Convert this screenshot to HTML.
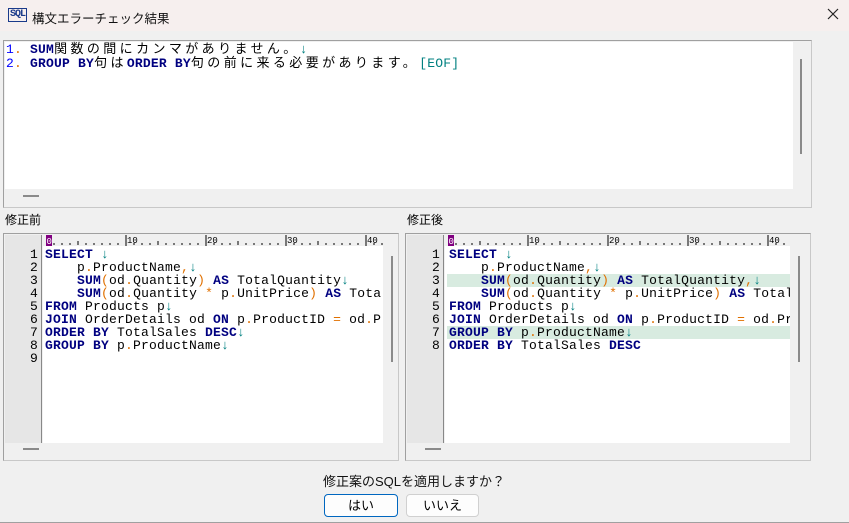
<!DOCTYPE html><html><head><meta charset="utf-8"><style>
*{margin:0;padding:0;box-sizing:border-box}
body{width:849px;height:523px;background:#f0f0f0;position:relative;overflow:hidden;font-family:"Liberation Sans","Noto Sans CJK JP",sans-serif}
.title{position:absolute;left:0;top:0;width:849px;height:31px;background:#f6efee}
.abs{position:absolute}
.mono{font-family:"Liberation Mono","Noto Sans CJK JP",monospace;font-size:13px;line-height:13px;white-space:pre;color:#000;letter-spacing:0.2px}
.j{letter-spacing:3.4px}
.k{color:#000080;font-weight:bold}
.o{color:#e07000}
.a{color:#008080}
.n{color:#0000ff}
.panel{position:absolute;border:1px solid #a0a0a0;border-right-color:#c8c8c8;border-bottom-color:#c8c8c8;background:#f0f0f0}
.thumb{position:absolute;width:2px;background:#8a8a8a}
.dash{position:absolute;width:16px;height:2px;background:#8a8a8a}
.btn{position:absolute;height:23px;border:1px solid #d0d0d0;border-radius:4px;background:#fdfdfd;font-size:13px;text-align:center;line-height:21px}
.hl{position:absolute;height:13px;background:#d8ebe0}
</style></head><body>
<div class="title"></div>
<div class="abs" style="left:8px;top:8px;font-size:10px;font-weight:bold;color:#1a3a8a;font-family:'Liberation Mono',monospace;letter-spacing:-1px;border:1px solid #1a3a8a;padding:0 1px;line-height:12px">SQL</div>
<div class="abs" style="left:32px;top:8px;font-size:12.5px;color:#111">構文エラーチェック結果</div>
<svg class="abs" style="left:827px;top:8px" width="12" height="12"><path d="M1 1L11 11M11 1L1 11" stroke="#222" stroke-width="1.2"/></svg>

<div class="panel" style="left:3px;top:40px;width:809px;height:168px">
 <div class="abs" style="left:1px;top:1px;width:788px;height:147px;background:#fff"></div>
 <div class="thumb" style="left:796px;top:18px;height:95px"></div>
 <div class="dash" style="left:19px;top:154px"></div>
</div>
<div class="abs mono" style="left:6px;top:43px;line-height:14px"><span class="n">1</span><span class="o">.</span> <span class="k">SUM</span><span class="j">関数の間にカンマがありません。</span><span class="a">↓</span>
<span class="n">2</span><span class="o">.</span> <span class="k">GROUP BY</span><span class="j">句は</span><span class="k">ORDER BY</span><span class="j">句の前に来る必要があります。</span><span class="a">[EOF]</span></div>

<div class="abs" style="left:5px;top:211px;font-size:12px">修正前</div>
<div class="abs" style="left:407px;top:211px;font-size:12px">修正後</div>

<!-- left editor -->
<div class="panel" style="left:3px;top:233px;width:396px;height:228px">
 <div class="abs" style="left:1px;top:1px;width:37px;height:208px;background:#e6e6e6;border-right:1px solid #888"></div>
 <div class="abs" style="left:39px;top:12px;width:340px;height:197px;background:#fff"></div>
 <svg class="abs" style="left:42px;top:1px" width="337" height="11">
  <rect x="0" y="0" width="6" height="11" fill="#800080"/><text x="0.5" y="9" font-family="Liberation Mono" font-size="9" fill="#fff">0</text>
  <path d="M8 10V8M16 10V8M24 10V8M32 10V6M40 10V8M48 10V8M56 10V8M64 10V8M72 10V8 M88 10V8M96 10V8M104 10V8M112 10V6M120 10V8M128 10V8M136 10V8M144 10V8M152 10V8 M168 10V8M176 10V8M184 10V8M192 10V6M200 10V8M208 10V8M216 10V8M224 10V8M232 10V8 M248 10V8M256 10V8M264 10V8M272 10V6M280 10V8M288 10V8M296 10V8M304 10V8M312 10V8 M328 10V8M336 10V8 M80 11V0M160 11V0M240 11V0M320 11V0" stroke="#000" stroke-width="1"/>
  <g font-family="Liberation Mono" font-size="9" fill="#000"><text x="81" y="8">10</text><text x="161" y="8">20</text><text x="241" y="8">30</text><text x="321" y="8">40</text></g>
 </svg>
 <div class="thumb" style="left:387px;top:22px;height:106px"></div>
 <div class="dash" style="left:19px;top:214px"></div>
</div>
<div class="abs mono" style="left:14px;top:248px;width:24px;text-align:right">1
2
3
4
5
6
7
8
9</div>
<div class="abs mono" style="left:45px;top:248px;width:337px;overflow:hidden"><span class="k">SELECT</span> <span class="a">↓</span>
    p<span class="o">.</span>ProductName<span class="o">,</span><span class="a">↓</span>
    <span class="k">SUM</span><span class="o">(</span>od<span class="o">.</span>Quantity<span class="o">)</span> <span class="k">AS</span> TotalQuantity<span class="a">↓</span>
    <span class="k">SUM</span><span class="o">(</span>od<span class="o">.</span>Quantity <span class="o">*</span> p<span class="o">.</span>UnitPrice<span class="o">)</span> <span class="k">AS</span> TotalSales
<span class="k">FROM</span> Products p<span class="a">↓</span>
<span class="k">JOIN</span> OrderDetails od <span class="k">ON</span> p<span class="o">.</span>ProductID <span class="o">=</span> od<span class="o">.</span>ProductID
<span class="k">ORDER BY</span> TotalSales <span class="k">DESC</span><span class="a">↓</span>
<span class="k">GROUP BY</span> p<span class="o">.</span>ProductName<span class="a">↓</span></div>

<!-- right editor -->
<div class="panel" style="left:405px;top:233px;width:406px;height:228px">
 <div class="abs" style="left:1px;top:1px;width:37px;height:208px;background:#e6e6e6;border-right:1px solid #888"></div>
 <div class="abs" style="left:39px;top:12px;width:345px;height:197px;background:#fff"></div>
 <svg class="abs" style="left:42px;top:1px" width="342" height="11">
  <rect x="0" y="0" width="6" height="11" fill="#800080"/><text x="0.5" y="9" font-family="Liberation Mono" font-size="9" fill="#fff">0</text>
  <path d="M8 10V8M16 10V8M24 10V8M32 10V6M40 10V8M48 10V8M56 10V8M64 10V8M72 10V8 M88 10V8M96 10V8M104 10V8M112 10V6M120 10V8M128 10V8M136 10V8M144 10V8M152 10V8 M168 10V8M176 10V8M184 10V8M192 10V6M200 10V8M208 10V8M216 10V8M224 10V8M232 10V8 M248 10V8M256 10V8M264 10V8M272 10V6M280 10V8M288 10V8M296 10V8M304 10V8M312 10V8 M328 10V8M336 10V8 M80 11V0M160 11V0M240 11V0M320 11V0" stroke="#000" stroke-width="1"/>
  <g font-family="Liberation Mono" font-size="9" fill="#000"><text x="81" y="8">10</text><text x="161" y="8">20</text><text x="241" y="8">30</text><text x="321" y="8">40</text></g>
 </svg>
 <div class="thumb" style="left:392px;top:22px;height:106px"></div>
 <div class="dash" style="left:19px;top:214px"></div>
</div>
<div class="hl" style="left:447px;top:274px;width:343px"></div>
<div class="hl" style="left:447px;top:326px;width:343px"></div>
<div class="abs mono" style="left:416px;top:248px;width:24px;text-align:right">1
2
3
4
5
6
7
8</div>
<div class="abs mono" style="left:449px;top:248px;width:341px;overflow:hidden"><span class="k">SELECT</span> <span class="a">↓</span>
    p<span class="o">.</span>ProductName<span class="o">,</span><span class="a">↓</span>
    <span class="k">SUM</span><span class="o">(</span>od<span class="o">.</span>Quantity<span class="o">)</span> <span class="k">AS</span> TotalQuantity<span class="o">,</span><span class="a">↓</span>
    <span class="k">SUM</span><span class="o">(</span>od<span class="o">.</span>Quantity <span class="o">*</span> p<span class="o">.</span>UnitPrice<span class="o">)</span> <span class="k">AS</span> TotalSales
<span class="k">FROM</span> Products p<span class="a">↓</span>
<span class="k">JOIN</span> OrderDetails od <span class="k">ON</span> p<span class="o">.</span>ProductID <span class="o">=</span> od<span class="o">.</span>ProductID
<span class="k">GROUP BY</span> p<span class="o">.</span>ProductName<span class="a">↓</span>
<span class="k">ORDER BY</span> TotalSales <span class="k">DESC</span></div>

<div class="abs" style="left:323px;top:471px;font-size:13px;color:#111">修正案のSQLを適用しますか？</div>
<div class="btn" style="left:324px;top:494px;width:74px;border:1px solid #0067c0">はい</div>
<div class="btn" style="left:406px;top:494px;width:73px">いいえ</div>
<div class="abs" style="left:0;top:522px;width:849px;height:1px;background:#a0a0a0"></div>
</body></html>
